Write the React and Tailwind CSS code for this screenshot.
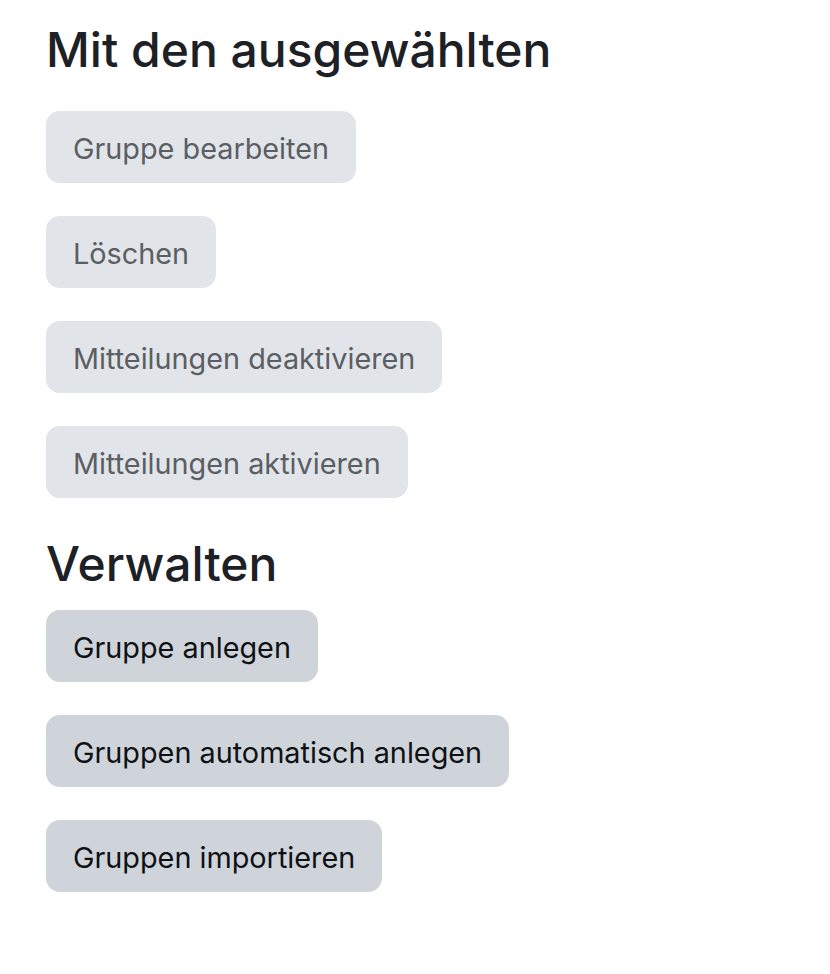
const selectedActions = [
  'Gruppe bearbeiten',
  'Löschen',
  'Mitteilungen deaktivieren',
  'Mitteilungen aktivieren',
];

const manageActions = [
  'Gruppe anlegen',
  'Gruppen automatisch anlegen',
  'Gruppen importieren',
];

function ActionButton({ label, disabled }) {
  return (
    <button
      disabled={disabled}
      className={
        disabled
          ? 'h-[72px] px-[27px] pt-[4px] rounded-[14px] bg-[#e1e4e8] text-[#5b5e62] text-[28.8px] leading-none text-left'
          : 'h-[72px] px-[27px] pt-[4px] rounded-[14px] bg-[#ced4da] text-[#0f1114] text-[28.8px] leading-none text-left'
      }
    >
      {label}
    </button>
  );
}

export default function App() {
  return (
    <div className="min-h-[974px] bg-white pl-[46px] pt-[21px] text-[#1d2125]" style={{ fontFamily: 'Inter, "Noto Sans", sans-serif' }}>
      {/* Mit den ausgewählten */}
      <h3 className="text-[48px] leading-[57px] font-medium">Mit den ausgewählten</h3>
      <div className="mt-[33px] flex flex-col items-start gap-[33px]">
        {selectedActions.map((a) => (
          <ActionButton key={a} label={a} disabled />
        ))}
      </div>

      {/* Verwalten */}
      <h3 className="mt-[37px] text-[48px] leading-[57px] font-medium">Verwalten</h3>
      <div className="mt-[18px] flex flex-col items-start gap-[33px]">
        {manageActions.map((a) => (
          <ActionButton key={a} label={a} />
        ))}
      </div>
    </div>
  );
}
